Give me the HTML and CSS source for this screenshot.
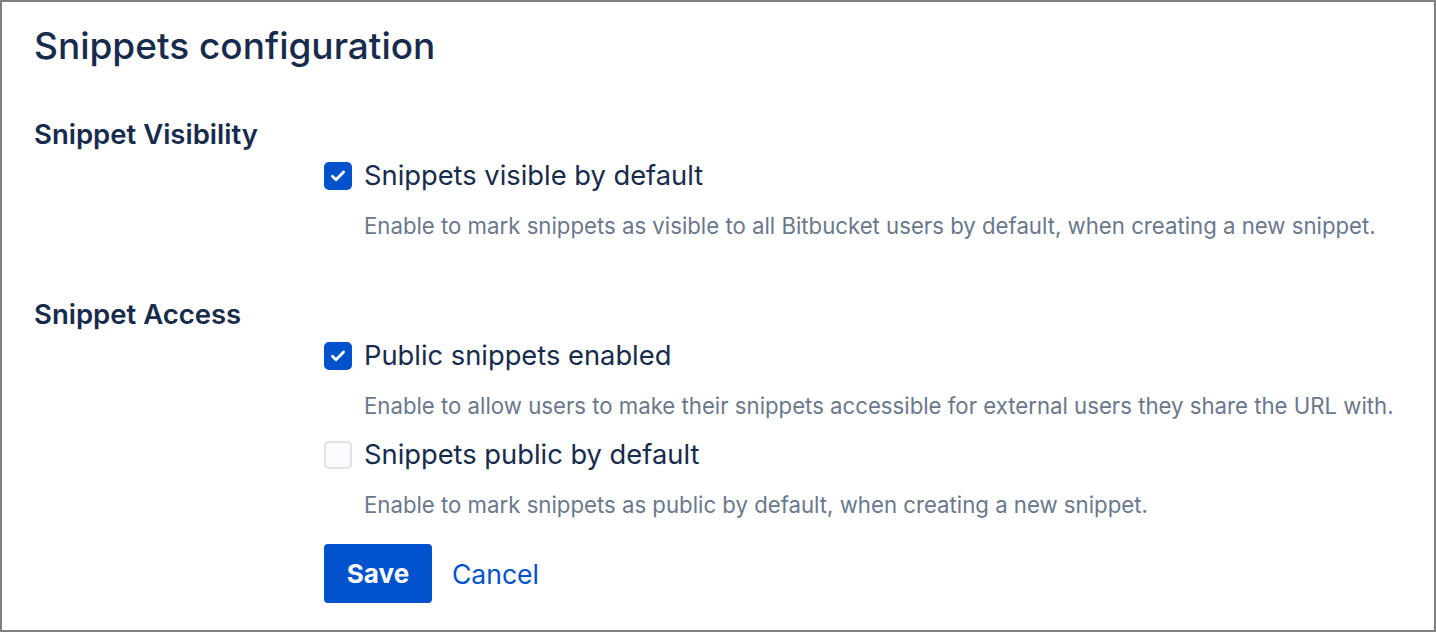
FILE: index.html
```html
<!DOCTYPE html>
<html lang="en">
<head>
<meta charset="utf-8">
<title>Snippets configuration</title>
<link rel="stylesheet" href="styles.css">
</head>
<body>
<main class="frame">
  <h1 class="title">Snippets configuration</h1>
  <form class="form">
    <section class="section">
      <h2 class="section-title">Snippet Visibility</h2>
      <div class="fields">
        <label class="check-row">
          <span class="box checked"><svg viewBox="0 0 24 24" width="24" height="24"><path d="M6.4 12.3l3.6 3.5 7.6-7.8" fill="none" stroke="#fff" stroke-width="2.8" stroke-linecap="round" stroke-linejoin="round"/></svg></span>
          <span class="check-label">Snippets visible by default</span>
        </label>
        <p class="desc">Enable to mark snippets as visible to all Bitbucket users by default, when creating a new snippet.</p>
      </div>
    </section>
    <section class="section access">
      <h2 class="section-title">Snippet Access</h2>
      <div class="fields">
        <label class="check-row">
          <span class="box checked"><svg viewBox="0 0 24 24" width="24" height="24"><path d="M6.4 12.3l3.6 3.5 7.6-7.8" fill="none" stroke="#fff" stroke-width="2.8" stroke-linecap="round" stroke-linejoin="round"/></svg></span>
          <span class="check-label">Public snippets enabled</span>
        </label>
        <p class="desc">Enable to allow users to make their snippets accessible for external users they share the URL with.</p>
        <label class="check-row second">
          <span class="box"></span>
          <span class="check-label">Snippets public by default</span>
        </label>
        <p class="desc">Enable to mark snippets as public by default, when creating a new snippet.</p>
        <div class="actions">
          <button type="button" class="btn-primary">Save</button>
          <a class="btn-link" href="#">Cancel</a>
        </div>
      </div>
    </section>
  </form>
</main>
</body>
</html>
```

FILE: styles.css
```css
* { box-sizing: border-box; }
html, body { margin: 0; padding: 0; }
body {
  font-family: Inter, "Noto Sans", "Liberation Sans", sans-serif;
  color: #172B4D;
  background: #fff;
}
.frame {
  width: 1436px;
  height: 632px;
  border: 2px solid #808080;
  padding: 22px 32px 0 32px;
  overflow: hidden;
}
.title {
  margin: 0;
  font-size: 37px;
  line-height: 44px;
  font-weight: 500;
  color: #172B4D;
}
.form { margin: 50px 0 0 0; }
.section-title {
  margin: 0;
  font-size: 27.5px;
  line-height: 32px;
  font-weight: 600;
  color: #172B4D;
}
.access { margin-top: 58px; }
.fields {
  margin-left: 290px;
  margin-top: 10px;
  display: flex;
  flex-direction: column;
  align-items: flex-start;
}
.check-row {
  display: flex;
  align-items: center;
  gap: 12px;
  height: 32px;
  cursor: pointer;
}
.check-row.second { margin-top: 19px; }
.box {
  width: 28px;
  height: 28px;
  border-radius: 5px;
  border: 2px solid #DFE1E6;
  background: #FAFBFC;
  display: flex;
  align-items: center;
  justify-content: center;
}
.box.checked {
  background: #0052CC;
  border-color: #0052CC;
}
.check-label {
  font-size: 27.3px;
  line-height: 32px;
  color: #172B4D;
}
.desc {
  margin: 20px 0 0 40px;
  font-size: 22.2px;
  line-height: 28px;
  color: #6B778C;
}
.actions {
  margin-top: 25px;
  display: flex;
  align-items: center;
  gap: 20px;
}
.btn-primary {
  width: 108px;
  height: 59px;
  border: none;
  border-radius: 4px;
  background: #0052CC;
  color: #fff;
  font-family: inherit;
  font-size: 26px;
  font-weight: 700;
  padding: 0;
}
.btn-link {
  color: #0052CC;
  text-decoration: none;
  font-size: 26.5px;
}
```
